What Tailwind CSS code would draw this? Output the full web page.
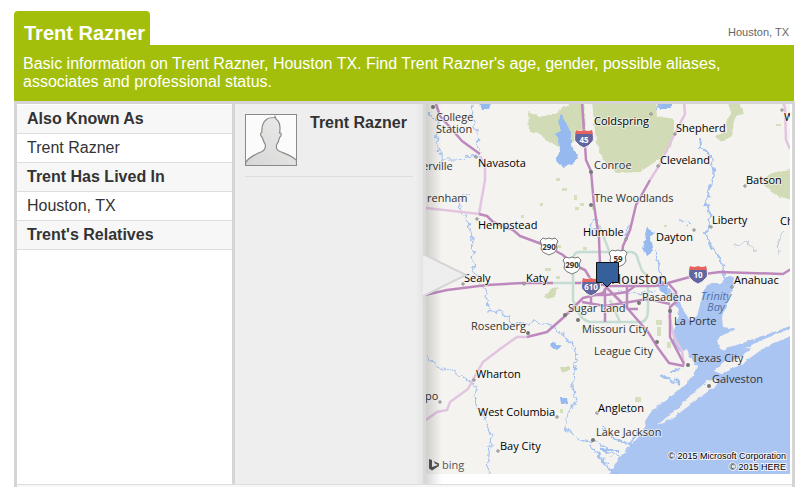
<!DOCTYPE html>
<html lang="en">
<head>
  <meta charset="UTF-8" />
  <meta name="viewport" content="width=device-width, initial-scale=1.0"/>
  <title>Trent Razner</title>
  <script src="https://cdn.jsdelivr.net/npm/@tailwindcss/browser@4"></script>
</head>
<body class="bg-white text-[#333] font-['Liberation_Sans',Arial,sans-serif] overflow-hidden">
  <main class="min-h-screen pl-[14px] pr-[13px] pt-[11px] flex flex-col">

    <!-- Name tab -->
    <header class="flex items-end justify-between pr-[6px]">
      <h1 class="bg-[#a3bf0b] text-white text-[20px] leading-[24px] font-bold rounded-t-[4px] pl-[10px] pr-[5px] pt-[10px]">Trent Razner</h1>
      <p class="text-[11px] leading-[14px] pb-[6px] text-[#666]">Houston, TX</p>
    </header>

    <p class="mr-px bg-[#a3bf0b] text-white text-[16px] leading-[18px] px-[9px] pt-[10px] pb-[10px]">Basic information on Trent Razner, Houston TX. Find Trent Razner's age, gender, possible aliases, associates and professional status.</p>

    <section class="flex-1 border-3 border-b-0 border-[#d5d5d5]">
      <div class="flex h-[380px]">
        <!-- Facts -->
        <div class="flex-1 border-r-3 border-[#d5d5d5] pt-px text-[16px] leading-[28px]">
          <h2 class="bg-[#f7f7f7] font-bold border-b border-[#ddd] pl-[10px]">Also Known As</h2>
          <p class="border-b border-[#ddd] pl-[10px]">Trent Razner</p>
          <h2 class="bg-[#f7f7f7] font-bold border-b border-[#ddd] pl-[10px]">Trent Has Lived In</h2>
          <p class="border-b border-[#ddd] pl-[10px]">Houston, TX</p>
          <h2 class="bg-[#f7f7f7] font-bold border-b border-[#ddd] pl-[10px]">Trent's Relatives</h2>
        </div>

        <!-- Person -->
        <div class="w-[188px] shrink-0 bg-linear-to-r from-[#eee] from-96% to-[#e4e4e4] px-[10px] pt-[10px]">
          <div class="flex gap-[13px] border-b border-[#ddd] pb-[10px]">
            <svg class="w-[52px] h-[52px] shrink-0" viewBox="0 0 52 52" role="img" aria-label="No photo">
              <defs>
                <linearGradient id="skin" x1="0" y1="1" x2="1" y2="0">
                  <stop offset="0" stop-color="#d6d6d6"/>
                  <stop offset="1" stop-color="#ededeb"/>
                </linearGradient>
              </defs>
              <rect x=".5" y=".5" width="51" height="51" fill="#fbfbfb"/>
              <path d="M.5 49C2 45 11 40 17 37.500C20 36 20.500 34 20.500 31C18.500 28 18 25 17 23C15 21 15 19 17 18C16.500 13 18 8 22 5C24 3.500 27 3.500 29.500 3.500L30 2.500L31 5C35 8 35.500 14 34.500 19C37 18.500 36.500 22 34.500 23.500C34 27 33 29 31.500 31C31 35 32 36 35 37.500C41 40 48 42 51.500 46.500V51.500H.5Z" fill="url(#skin)" stroke="#8a8a8a" stroke-width="1.200"/>
              <rect x=".5" y=".5" width="51" height="51" fill="none" stroke="#8a8a8a"/>
            </svg>
            <h2 class="text-[16px] leading-[18px] font-bold whitespace-nowrap">Trent Razner</h2>
          </div>
        </div>

        <!-- Map -->
        <div class="relative shrink-0 border-l-3 border-[#d9d9d9] pr-[2px]">
          <svg class="block w-[364px] h-[370px]" viewBox="426 104 364 370" role="img" aria-label="Map of Houston, TX">
            <defs>
              <filter id="rough" x="-10%" y="-10%" width="120%" height="120%">
                <feTurbulence type="fractalNoise" baseFrequency=".16" numOctaves="2" seed="4"/>
                <feDisplacementMap in="SourceGraphic" scale="9" xChannelSelector="R" yChannelSelector="G"/>
              </filter>
              <filter id="shore" x="-5%" y="-5%" width="110%" height="110%">
                <feTurbulence type="fractalNoise" baseFrequency=".18" numOctaves="2" seed="9"/>
                <feDisplacementMap in="SourceGraphic" scale="4" xChannelSelector="R" yChannelSelector="G"/>
              </filter>
              <g id="interstate">
                <path d="M-8-8Q-4-6 0-8Q4-6 8-8Q11 2 8 4Q5 8 0 10Q-5 8-8 4Q-11 2-8-8Z" fill="#63659f" stroke="#f4f3f0"/>
                <path d="M-8-8Q-4-6 0-8Q4-6 8-8L9-4H-9Z" fill="#e7625e"/>
              </g>
              <path id="us" d="M-6-8Q-3-6 0-8Q3-6 6-8L9-5Q6-1 8 3Q7 7 0 9Q-7 7-8 3Q-6-1-9-5Z" fill="#fff" stroke="#777"/>
            </defs>
            <rect x="426" y="104" width="364" height="370" fill="#f4f3f0"/>

            <!-- Forests and parks -->
            <g fill="#d1dcb7" filter="url(#shore)">
              <path d="M528 112L540 117L555 113L567 106L572 102H584L586 126L580 134L570 144L560 148L546 140L540 134L529 132Z"/>
              <path d="M592 102H656L657 116L674 119L674 128L671 148L655 162L640 172L616 173L602 158L596 140Z"/>
              <path d="M728 102H739L743 114L735 116L732 136L722 142L714 136L727 132L726 122L731 114Z"/>
              <path d="M760 180L775 172L792 170V200L780 197L770 190Z"/>
              <path d="M560 367H570V370L562 373Z"/>
              <path d="M545 297L552 288L559 287L556 294L549 299Z"/>
            </g>
            <g fill="#d3dfbd">
              <path d="M556 178h4v3h-4zM574 195h3v5h-3zM580 203h4v3h-4zM562 188h5v3h-5zM540 203h3v3h-3zM575 207h4v3h-4zM521 215h3v3h-3zM545 268h6v3h-6zM556 276h4v3h-4zM556 245h5v3h-5zM583 247h4v3h-4zM664 225h3v2h-3zM656 320h6v5h-6zM657 327h4v9h-4zM667 342h4v6h-4zM582 326h3v3h-3zM635 397h6v5h-6zM560 409h3v4h-3zM776 124h5v2h-5zM592 205h3v5h-3z"/>
            </g>

            <!-- Water -->
            <g fill="#abc5f2" filter="url(#shore)">
              <path d="M673 302L678 308L679 316L673 330L673 342L680 352L687 349L689 356L697 366L693 376L680 389L667 400L653 409L647 418L644 431L620 457L607 478H800V332L765 347L742 364L722 374L714 371L728 359L757 342L790 329V326L757 338L722 350L717 342L720 336L728 333L736 329L723 327L722 317L727 303L733 288L735 278L728 275L722 283L710 283L704 290L697 316L690 321L682 308L678 296L668 287L664 294Z"/>
              <path d="M561 113L566 124L571 133L571 145L578 155L574 164L563 167L556 160L560 152L559 140L554 134L561 131L558 121Z" fill="#96b9ef"/>
              <path d="M647 228L655 232L650 239L653 252L646 256L642 248L646 240L645 234ZM655 102H674L670 109H660ZM480 103H491L489 109H482ZM552 342L562 346L557 350L551 347ZM560 398L567 398L568 403L561 404ZM656 275L668 285L668 295L660 291Z" fill="#96b9ef"/>
            </g>
            <g fill="#f2f1ee" filter="url(#shore)">
              <path d="M656 426L672 413L690 396L707 381L716 379L719 383L702 396L674 417Z"/>
            </g>
            <path d="M714 371L723 365L730 366L722 374Z" fill="#f2f1ee"/>
            <path d="M722 362L732 354L748 348L752 349L736 360Z" fill="#abc5f2" filter="url(#shore)"/>

            <!-- Rivers -->
            <g fill="none" stroke="#a2c0f0" stroke-width="1.200" filter="url(#rough)">
              <path d="M430 113L438 125L436 144L443 160L455 160L470 156L480 155M472 104L470 116L477 130L478 150M462 196L472 194M462 199L460 210L468 222L473 238L472 256L474 270L480 285L487 292L488 312L500 310L514 325L535 322L550 325L563 335L572 345L577 352L572 385L577 400L565 418L565 428L578 438L600 444L612 455L622 456"/>
              <path d="M426 357L440 368L462 376L475 386L477 404L485 418L491 435L489 455L488 476"/>
              <path d="M700 138L701 146L711 156L714 175L709 192L706 202L709 215L707 235L712 248L720 258L724 275L730 284" stroke-width="2"/>
              <path d="M662 104L655 110M628 225L625 235M655 250L660 270L665 285M618 290L635 294L656 290M600 235L590 225L597 218M680 220L690 225"/>
              <path d="M600 427L612 438L630 444L640 430M636 412L620 410M600 450L618 450M590 445L607 466L618 474M660 375L680 382M680 368L670 372" stroke-width="2"/>
              <path d="M735 247L745 241L757 252M785 232L778 240L779 255" stroke="#c3ccd8"/>
            </g>

            <!-- Minor roads -->
            <g fill="none" stroke="#c4dcd2" stroke-width="2.500">
              <path d="M573 300V260Q573 252 580 252H630Q637 252 638 260L641 268Q642 272 647 275L648 290V310Q648 320 642 322H590Q580 320 575 305Z"/>
              <path d="M553 283H575M599 225L604 238L612 258M610 300L620 322"/>
            </g>
            <g fill="none" stroke="#e3c4e0" stroke-width="2.500">
              <path d="M480 156L485 166V180L479 214L426 208M684 102L685 114L675 133L659 166L650 180M527 337H517L500 349L483 362L475 376L468 389L450 402L447 410L437 412L426 420M783 102L785 108L786 140L790 149M669 315L674 337L682 351L684 366"/>
            </g>

            <!-- Highways -->
            <g fill="none" stroke="#bd89bd" stroke-width="2.500" stroke-linejoin="round">
              <path d="M436 104L440 116L462 141L480 154"/>
              <path d="M479 214L487 216L493 222L513 230L520 236L547 246L563 255L572 264L585 270L590 278"/>
              <path d="M582 102L585 145L586 160L591 171L594 205L599 238L600 265L607 288L628 309L648 332L658 348L669 363L684 366"/>
              <path d="M650 180L636 205L630 230L623 246L621 260L612 278L603 293L583 298L564 317L547 332L527 337"/>
              <path d="M420 296L447 290L487 285L523 283H553M575 283H590L610 286H655L668 283L697 275L720 272L783 274L791 269"/>
              <path d="M591 288V304M592 295H606L627 292L635 286M627 285V308M582 302L605 306L648 299L670 304M605 288V322M668 283L676 292V302L670 307V337L684 364M627 309H638"/>
            </g>

            <!-- Town markers -->
            <g fill="#f4f3f0" stroke="#666" stroke-width=".8">
              <circle cx="476" cy="157" r="1.200"/><circle cx="477" cy="219" r="1.200"/><circle cx="463" cy="284" r="1.200"/><circle cx="524" cy="284" r="1.200"/>
              <circle cx="474" cy="380" r="1.200"/><circle cx="440" cy="402" r="1.200"/><circle cx="557" cy="417" r="1.200"/><circle cx="498" cy="451" r="1.200"/>
              <circle cx="597" cy="413" r="1.200"/><circle cx="651" cy="114" r="1.200"/><circle cx="675" cy="134" r="1.200"/><circle cx="658" cy="166" r="1.200"/>
              <circle cx="745" cy="186" r="1.200"/><circle cx="711" cy="227" r="1.200"/><circle cx="694" cy="230" r="1.200"/><circle cx="732" cy="287" r="1.200"/><circle cx="782" cy="110" r="1.200"/><circle cx="626" cy="239" r="1.200"/>
            </g>
            <g fill="#777">
              <circle cx="433" cy="107" r="2"/><circle cx="591" cy="172" r="2"/><circle cx="591" cy="205" r="2"/><circle cx="565" cy="315" r="2"/><circle cx="578" cy="320" r="2"/>
              <circle cx="528" cy="333" r="2"/><circle cx="639" cy="303" r="2"/><circle cx="670" cy="311" r="2"/><circle cx="657" cy="342" r="2"/><circle cx="688" cy="365" r="2"/><circle cx="709" cy="386" r="2"/><circle cx="593" cy="440" r="2"/>
            </g>

            <!-- Route shields -->
            <use href="#interstate" x="584" y="138"/>
            <use href="#interstate" x="591" y="286"/>
            <use href="#interstate" x="698" y="274"/>
            <use href="#us" x="549" y="246"/>
            <use href="#us" x="572" y="265"/>
            <use href="#us" x="618" y="258"/>
            <g class="font-['Open_Sans',sans-serif] font-bold text-[8px]" text-anchor="middle">
              <g fill="#fff"><text x="584" y="143">45</text><text x="591" y="290">610</text><text x="698" y="278">10</text></g>
              <g fill="#333"><text x="549" y="250">290</text><text x="572" y="268">290</text><text x="618" y="262">59</text></g>
            </g>

            <!-- Place names -->
            <g class="font-['Open_Sans','Noto_Sans',sans-serif] text-[11px]" stroke="#f4f3f0" stroke-opacity=".7" stroke-width="2" stroke-linejoin="round" paint-order="stroke">
              <g fill="#333">
                <text x="436" y="121">College</text>
                <text x="436" y="133">Station</text>
                <text x="594" y="169">Conroe</text>
                <text x="594" y="202">The Woodlands</text>
                <text x="568" y="312">Sugar Land</text>
                <text x="642" y="301">Pasadena</text>
                <text x="582" y="333">Missouri City</text>
                <text x="471" y="330">Rosenberg</text>
                <text x="594" y="355">League City</text>
                <text x="422" y="170">erville</text>
                <text x="427" y="202">renham</text>
                <text x="425" y="400">po</text>
                <text x="596" y="436">Lake Jackson</text>
              </g>
              <g fill="#000">
                <text x="594" y="125">Coldspring</text>
                <text x="676" y="132">Shepherd</text>
                <text x="478" y="167">Navasota</text>
                <text x="660" y="164">Cleveland</text>
                <text x="746" y="184">Batson</text>
                <text x="712" y="224">Liberty</text>
                <text x="780" y="225">Ch</text>
                <text x="784" y="121">W</text>
                <text x="478" y="229">Hempstead</text>
                <text x="583" y="236">Humble</text>
                <text x="656" y="241">Dayton</text>
                <text x="734" y="284">Anahuac</text>
                <text x="464" y="282">Sealy</text>
                <text x="526" y="282">Katy</text>
                <text x="476" y="378">Wharton</text>
                <text x="478" y="416">West Columbia</text>
                <text x="500" y="450">Bay City</text>
                <text x="598" y="412">Angleton</text>
              </g>
              <text x="611" y="284" fill="#222" class="text-[14px]">Houston</text>
            </g>
            <g class="font-['Open_Sans','Noto_Sans',sans-serif] text-[11px]" fill="#333">
              <text x="674" y="325">La Porte</text>
              <text x="692" y="362">Texas City</text>
              <text x="712" y="383">Galveston</text>
              <g fill="#4d70aa" font-style="italic" text-anchor="middle"><text x="716" y="300">Trinity</text><text x="716" y="311">Bay</text></g>
            </g>

            <!-- Pin -->
            <path d="M596.500 262.500H618.500V282.500H611.500L607 287L602.500 282.500H596.500Z" fill="#36609b" stroke="#111"/>

            <!-- Credits -->
            <path d="M429 459L432 460V467L438 465L435 463.500L433.500 461L439 463.500V466L432 470.500L429 468.500Z" fill="#555"/>
            <text x="442" y="469" fill="#555" class="font-['Open_Sans',sans-serif] text-[11px]">bing</text>
            <g class="font-['Liberation_Sans',Arial,sans-serif] text-[9px]" text-anchor="end" fill="#000" stroke="#fff" stroke-opacity=".8" stroke-width="2" paint-order="stroke">
              <text x="786" y="459">© 2015 Microsoft Corporation</text>
              <text x="786" y="470">© 2015 HERE</text>
            </g>
          </svg>
          <!-- Shade and pointer over the map edge -->
          <div class="absolute inset-y-0 left-0 w-[16px] bg-linear-to-r from-black/15 to-transparent"></div>
          <svg class="absolute -left-[3px] top-[148px] w-[46px] h-[46px]" viewBox="0 0 46 46" aria-hidden="true">
            <path d="M0 2L43 23L0 44Z" fill="#eee"/>
            <path d="M0 2L43 23L0 44" fill="none" stroke="#d5d5d5" stroke-width="2"/>
          </svg>
        </div>
      </div>
      <div class="h-[3px] border-t border-[#ddd] bg-[#f7f7f7]"></div>
    </section>
  </main>
</body>
</html>
